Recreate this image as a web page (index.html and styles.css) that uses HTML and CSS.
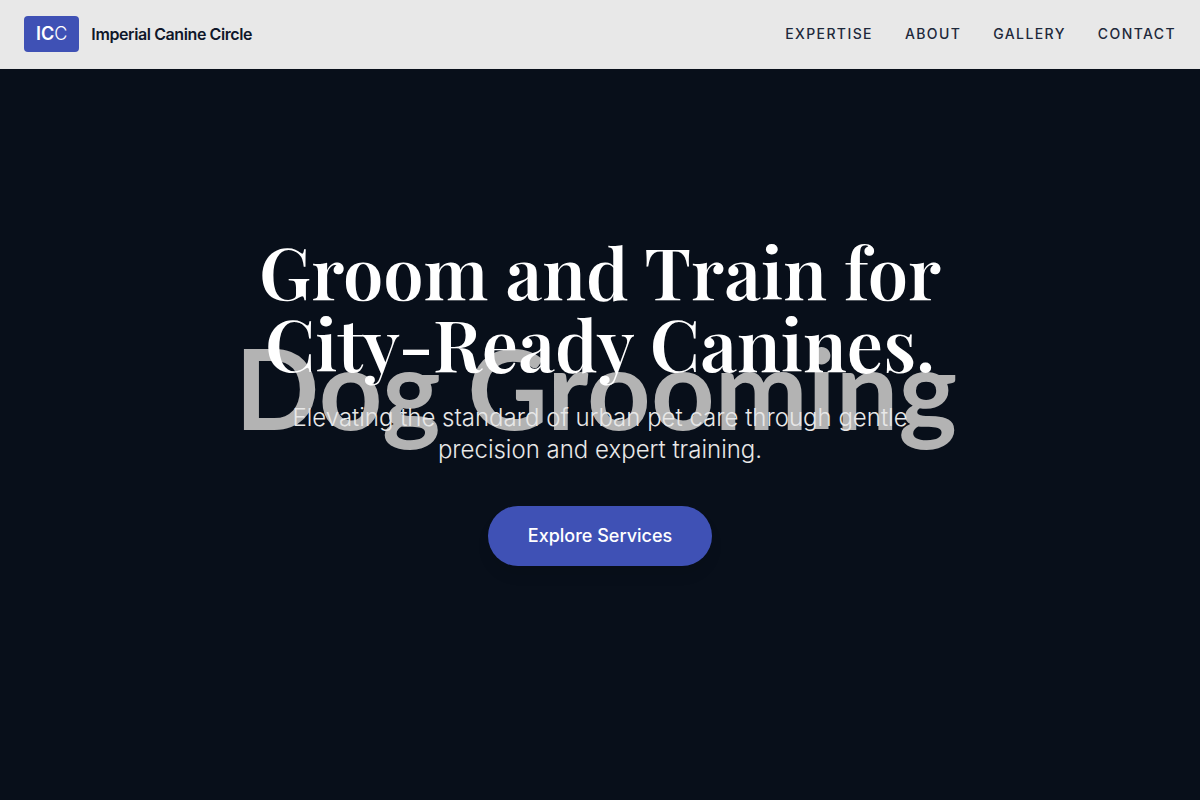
FILE: index.html
```html
<!DOCTYPE html>
<html lang="en">
<head>
<meta charset="utf-8">
<meta name="viewport" content="width=device-width, initial-scale=1">
<title>Imperial Canine Circle</title>
<link rel="stylesheet" href="styles.css">
</head>
<body>
<header class="header">
  <a class="brand" href="#"><span class="brand-mark"><b>IC</b>C</span><span class="brand-name">Imperial Canine Circle</span></a>
  <nav class="nav">
    <a href="#expertise">Expertise</a>
    <a href="#about">About</a>
    <a href="#gallery">Gallery</a>
    <a href="#contact">Contact</a>
  </nav>
</header>
<main class="hero">
  <div class="backdrop" aria-hidden="true">Dog Grooming</div>
  <div class="content">
    <h1 class="title">Groom and Train for City-Ready Canines.</h1>
    <p class="lead">Elevating the standard of urban pet care through gentle precision and expert training.</p>
    <a class="cta" href="#expertise">Explore Services</a>
  </div>
</main>
</body>
</html>
```
FILE: styles.css
```css
* { box-sizing: border-box; }
body {
  margin: 0;
  min-height: 100vh;
  display: flex;
  flex-direction: column;
  background: #080f1a;
  font-family: Inter, "Liberation Sans", sans-serif;
}
a { color: inherit; text-decoration: none; }
.header {
  display: flex;
  align-items: center;
  justify-content: space-between;
  padding: 16px 24px;
  border-bottom: 1px solid #e5e5e5;
  background: #e8e8e8;
  color: #0f172a;
}
.brand { display: flex; align-items: center; gap: 12px; }
.brand-mark {
  padding: 4px 12px;
  border-radius: 4px;
  background: #3f51b5;
  color: #fff;
  font-size: 18px;
  line-height: 28px;
  font-weight: 300;
}
.brand-mark b { font-weight: 600; }
.brand-name { font-size: 16px; font-weight: 600; letter-spacing: -0.4px; }
.nav {
  display: flex;
  gap: 32px;
  color: #1e293b;
  font-size: 14px;
  line-height: 20px;
  font-weight: 500;
  letter-spacing: 1.4px;
  text-transform: uppercase;
}
.hero {
  position: relative;
  flex: 1;
  display: flex;
  align-items: center;
  justify-content: center;
  padding: 24px;
}
.backdrop {
  position: absolute;
  inset: 0;
  padding: 0 8px 96px 0;
  display: flex;
  align-items: center;
  justify-content: center;
  color: #b3b3b3;
  font-family: Lato, sans-serif;
  font-size: 111px;
  font-weight: 700;
  white-space: nowrap;
}
.content {
  position: relative;
  max-width: 768px;
  padding-bottom: 69px;
  text-align: center;
  color: #fff;
}
.title {
  margin: 0 0 24px;
  font-family: "Playfair Display", "Liberation Serif", serif;
  font-size: 72px;
  line-height: 72px;
  font-weight: 600;
}
.lead {
  max-width: 672px;
  margin: 0 auto 40px;
  color: #e8e8e8;
  font-size: 24px;
  line-height: 32px;
  font-weight: 300;
}
.cta {
  display: inline-block;
  padding: 16px 40px;
  border-radius: 30px;
  background: #3f51b5;
  box-shadow: 0 10px 15px -3px rgba(0, 0, 0, 0.1);
  font-size: 18px;
  line-height: 28px;
  font-weight: 500;
}
```
